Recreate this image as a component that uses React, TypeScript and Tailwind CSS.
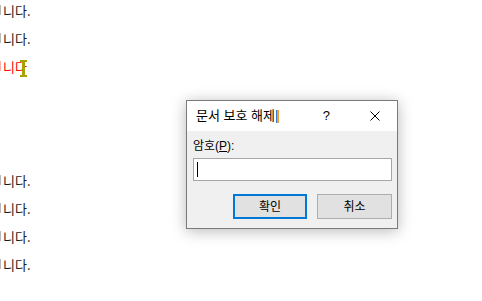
import React from "react";

const font = { fontFamily: '"Noto Sans CJK KR", "Noto Sans", sans-serif' };
const dialogFont = { fontFamily: '"Liberation Sans", "Noto Sans CJK KR", sans-serif' };

function DocLine({ red = false }: { red?: boolean }) {
  return (
    <div className="h-[28px] flex items-start">
      <div className={`mt-[5px] w-[1px] h-[10px] ${red ? "bg-[#ffb0b0]" : "bg-[#b8b8b8]"}`} />
      <div
        className={`ml-[2px] text-[13px] leading-[22px] whitespace-nowrap ${
          red ? "text-[#ff0000]" : "text-[#1a1a1a]"
        }`}
      >
        니다{red ? "" : "."}
      </div>
    </div>
  );
}

export default function App() {
  return (
    <div className="relative w-[482px] h-[301px] bg-white overflow-hidden" style={font}>
      {/* document text behind */}
      <div className="flex flex-col">
        <DocLine />
        <DocLine />
        <DocLine red />
        <div className="h-[84px]" />
        <div className="mt-[2px]">
          <DocLine />
          <DocLine />
          <DocLine />
          <DocLine />
        </div>
      </div>

      {/* mouse I-beam */}
      <svg className="absolute left-[20px] top-[60px]" width="8" height="17" viewBox="0 0 8 17">
        <path d="M0 0h7v2H5v13h2v2H0v-2h2V2H0z" fill="#a8a200" />
      </svg>

      {/* dialog */}
      <div
        className="absolute left-[186px] top-[100px] w-[212px] h-[129px] border border-[#7a7a7a] bg-[#f0f0f0] shadow-[0_2px_14px_rgba(0,0,0,0.28)] flex flex-col"
        style={dialogFont}
      >
        <div className="h-[30px] bg-white flex items-center pl-[9px] pr-[10px] text-[13px] text-black">
          <span className="flex items-center">
            문서 보호 해제
            <span className="ml-[1px] w-[1px] h-[13px] bg-[#3a7ad8]" />
            <span className="w-[2px] h-[13px] bg-[#f0a030]" />
          </span>
          <span className="ml-auto mr-[40px] text-[13px]">?</span>
          <svg width="10" height="10" viewBox="0 0 10 10" className="mr-[7px]">
            <path d="M0.5 0.5l9 9M9.5 0.5l-9 9" stroke="#000" strokeWidth="1" />
          </svg>
        </div>
        <div className="flex flex-col pl-[6px] pr-[5px] pt-[7px]">
          <div className="text-[12px] leading-[16px] text-black">
            암호(<span className="underline">P</span>):
          </div>
          <div className="mt-[4px] h-[23px] bg-white border border-[#a6a6a6] flex items-center pl-[3px]">
            <div className="w-[1px] h-[15px] bg-black" />
          </div>
          <div className="mt-[13px] flex justify-end gap-[10px]">
            <button className="w-[74px] h-[25px] bg-[#e1e1e1] border-2 border-[#0078d7] text-[12px] text-black">
              확인
            </button>
            <button className="w-[75px] h-[25px] bg-[#e1e1e1] border border-[#adadad] text-[12px] text-black">
              취소
            </button>
          </div>
        </div>
      </div>
    </div>
  );
}
